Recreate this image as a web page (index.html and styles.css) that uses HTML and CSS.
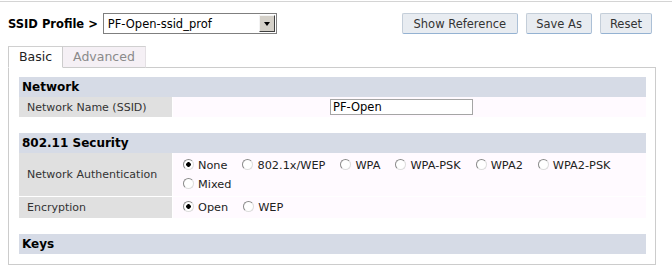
FILE: index.html
```html
<!DOCTYPE html>
<html lang="en">

<head>
  <meta charset="utf-8">
  <title>SSID Profile</title>
  <link rel="stylesheet" href="styles.css">
</head>

<body>
  <div class="page">
    <div class="toolbar">
      <span class="profile-label">SSID Profile &gt;</span>
      <div class="select">
        <span class="select-text">PF-Open-ssid_prof</span>
        <span class="select-arrow"><span class="tri"></span></span>
      </div>
      <div class="actions">
        <button class="btn">Show Reference</button>
        <button class="btn">Save As</button>
        <button class="btn">Reset</button>
      </div>
    </div>

    <div class="tabs">
      <span class="tab active">Basic</span>
      <span class="tab">Advanced</span>
      <span class="tab-fill"></span>
    </div>

    <div class="panel">
      <div class="section">
        <div class="section-head">Network</div>
        <div class="rows">
          <div class="label">Network Name (SSID)</div>
          <div class="value name-cell"><input class="text-input" type="text" value="PF-Open"></div>
        </div>
      </div>

      <div class="section">
        <div class="section-head">802.11 Security</div>
        <div class="rows">
          <div class="label">Network Authentication</div>
          <div class="value options">
            <label class="opt"><input type="radio" name="auth" checked>None</label>
            <label class="opt"><input type="radio" name="auth">802.1x/WEP</label>
            <label class="opt"><input type="radio" name="auth">WPA</label>
            <label class="opt"><input type="radio" name="auth">WPA-PSK</label>
            <label class="opt"><input type="radio" name="auth">WPA2</label>
            <label class="opt"><input type="radio" name="auth">WPA2-PSK</label>
            <label class="opt"><input type="radio" name="auth">Mixed</label>
          </div>
          <div class="label">Encryption</div>
          <div class="value options single">
            <label class="opt"><input type="radio" name="enc" checked>Open</label>
            <label class="opt"><input type="radio" name="enc">WEP</label>
          </div>
        </div>
      </div>

      <div class="section">
        <div class="section-head">Keys</div>
      </div>
    </div>
  </div>
</body>

</html>
```

FILE: styles.css
```css
body {
  margin: 0;
  font-family: Verdana, "DejaVu Sans", sans-serif;
  font-size: 11px;
  color: #222;
  background-color: #fff;
}
.page {
  margin-top: 1px;
  border-top: 1px solid #d4d4d4;
}

/* top bar */
.toolbar {
  display: flex;
  align-items: center;
  height: 21px;
  margin-top: 11px;
  padding: 0 20px 0 8px;
}
.profile-label {
  font-weight: bold;
  font-size: 11.5px;
  color: #000;
  margin-right: 5px;
}
.select {
  display: flex;
  align-items: center;
  width: 172px;
  height: 19px;
  border: 1px solid #7f7f7f;
  background-color: #fff;
}
.select-text {
  flex: 1;
  padding-left: 4px;
  font-size: 11.5px;
  color: #000;
}
.select-arrow {
  display: flex;
  align-items: center;
  justify-content: center;
  width: 14px;
  height: 15px;
  margin-right: 1px;
  background-color: #d4d0c8;
  border: 1px solid;
  border-color: #f4f4f4 #404040 #404040 #f4f4f4;
}
.tri {
  width: 0;
  height: 0;
  border-left: 3px solid transparent;
  border-right: 3px solid transparent;
  border-top: 4px solid #000;
}
.actions {
  display: flex;
  gap: 8px;
  margin-left: auto;
}
.btn {
  height: 21px;
  padding: 0 9px;
  font-family: inherit;
  font-size: 11.5px;
  color: #333;
  background-color: #e8ecf1;
  border: 1px solid #c4ced9;
  border-bottom-color: #94b2d2; /* blue shade at the bottom */
  border-right-color: #acc0d6;
  border-radius: 2px;
}
.btn:first-child {
  padding: 0 11px;
}

/* tabs */
.tabs {
  display: flex;
  margin: 12px 16px 0 8px;
}
.tab {
  height: 20px;
  line-height: 20px;
  padding: 0 10px;
  font-size: 12.5px;
  color: #8a8a8a;
  background-color: #f5f0f5;
  border-top: 1px solid #d0d0d0;
  border-right: 1px solid #e4e0e4;
  border-bottom: 1px solid #cccccc;
}
.tab.active {
  color: #222;
  background-color: #fff;
  border-left: 1px solid #cccccc;
  border-right: 1px solid #cccccc;
  border-bottom-color: #fff;
}
.tab-fill {
  flex: 1;
  border-bottom: 1px solid #cccccc;
}

/* panel */
.panel {
  margin: 0 16px 0 8px;
  padding: 9px 9px 10px 10px;
  border: 1px solid #cccccc;
  border-top: none;
}
.section + .section {
  margin-top: 16px;
}
.section-head {
  height: 20px;
  line-height: 20px;
  padding-left: 3px;
  font-size: 12px;
  font-weight: bold;
  color: #000;
  background-color: #d6dbe6;
}
.rows {
  display: grid;
  grid-template-columns: 153px 1fr;
  gap: 1px;
}
.label {
  display: flex;
  align-items: center;
  min-height: 20px;
  padding-left: 8px;
  color: #333;
  background-color: #e0e0e0;
}
.value {
  padding: 0 10px;
  background-color: #fffaff;
}
.name-cell {
  display: flex;
  align-items: center;
  padding-left: 157px;
}
.text-input {
  width: 143px;
  height: 16px;
  box-sizing: border-box;
  margin: 0;
  padding: 0 2px;
  font-family: inherit;
  font-size: 11.5px;
  color: #000;
  border: 1px solid #a5a5a5;
  outline: none;
}

/* radio groups */
.options {
  display: flex;
  flex-wrap: wrap;
  column-gap: 15px;
  padding: 3px 10px 2px;
  line-height: 19px;
  font-size: 11.3px;
}
.options.single {
  padding: 1px 10px;
}
.opt {
  display: inline-flex;
  align-items: center;
  color: #222;
}
.opt input {
  appearance: none;
  width: 11px;
  height: 11px;
  margin: 0 4px 3px 0;
  border: 1px solid;
  border-color: #8a8a8a #dcdcdc #dcdcdc #8a8a8a;
  border-radius: 50%;
  background-color: #fff;
}
.opt input:checked {
  background: radial-gradient(circle, #000 2px, #fff 2.6px);
}
```
